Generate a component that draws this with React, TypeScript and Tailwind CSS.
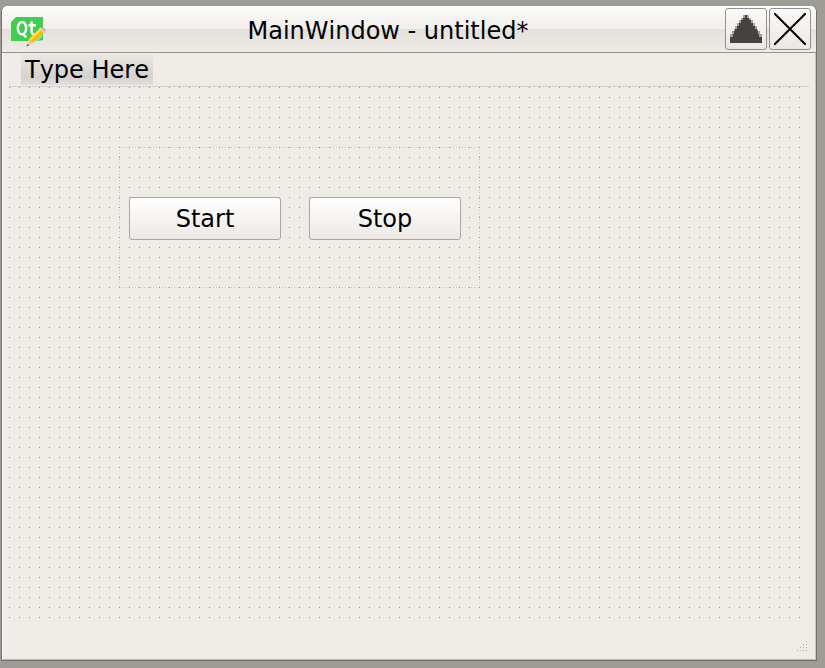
import React from "react";

const DOTS =
  "bg-[conic-gradient(from_270deg_at_1px_1px,#989591_90deg,transparent_0)] bg-[length:10px_10px]";

function QtIcon() {
  return (
    <svg width="36" height="34" viewBox="0 0 36 34" aria-hidden="true">
      <path d="M5 1H32V24L27 25H0V6Z" fill="#41cd52" />
      <ellipse cx="11" cy="12.2" rx="4.2" ry="6.2" fill="none" stroke="#fff" strokeWidth="2.4" />
      <path d="M12 18L15.3 21.4M20.6 5.5V16Q20.6 18.8 24.8 18.2M17.4 9.2H25" fill="none" stroke="#fff" strokeWidth="2.4" />
      <path d="M24 25L31 18L31.5 20L27 25Z" fill="#fff" opacity=".45" />
      <path d="M15.5 30.5L18 22.5L22.5 27Z" fill="#e9cfa4" />
      <path d="M18 23L29 12L33.5 16L22 27Z" fill="#f6bd10" />
      <path d="M19 23.7L30 13" stroke="#ffe43c" strokeWidth="2.2" />
      <path d="M29 12L31 10.5L35 14L33.5 16Z" fill="#d99a8c" />
      <path d="M28.3 12.7L29.8 11.3L34 15.2L32.7 16.8Z" fill="#d5d5d5" />
      <path d="M15.5 30.5L16.4 28L18 29.3Z" fill="#554a38" />
    </svg>
  );
}

function TitleButton({ label, children }: { label: string; children: React.ReactNode }) {
  return (
    <button
      aria-label={label}
      className="flex h-[42px] w-[42px] items-center justify-center rounded-[3px] border border-[#92908d] bg-linear-to-b from-[#fbfafa] to-[#ebe7e3]"
    >
      {children}
    </button>
  );
}

function PushButton({ children }: { children: React.ReactNode }) {
  return (
    <button className="h-[43px] w-[152px] rounded-[3px] border border-[#aaa6a3] bg-linear-to-b from-white to-[#ece8e5] pt-px text-[24px] leading-[40px]">
      {children}
    </button>
  );
}

export default function App() {
  return (
    <div className="h-[668px] w-[825px] bg-[#9e9c97] pt-[6px] pl-px font-['DejaVu_Sans',sans-serif] text-[24px] text-black [font-kerning:none]">
      <main className="flex h-[655px] w-[816px] flex-col overflow-hidden rounded-t-[6px] border-r border-b border-l border-[#73716e] bg-[#efece7]">
        <header className="flex h-[47px] shrink-0 items-start border-b border-[#96938f] bg-[linear-gradient(#fdfcfc_0px,#f1eeeb_23px,#e4e0db_23px,#eeebe7_46px)] pt-[2px] pr-[5px] pl-[9px]">
          <div className="mt-[8px] h-[34px] w-[36px]">
            <QtIcon />
          </div>
          <h1 className="ml-[200.5px] flex-1 whitespace-nowrap text-[24px] leading-[46px]">
            MainWindow - untitled*
          </h1>
          <div className="flex gap-[2px]">
            <TitleButton label="Shade">
              <svg width="32" height="28" viewBox="0 0 32 28" shapeRendering="crispEdges">
                <path
                  d="M13 0H19V3H21V5H23V8H25V11H27V14H28V16H30V19H32V28H0V19H2V16H4V14H5V11H7V8H9V5H11V3H13Z"
                  fill="#444341"
                  opacity=".45"
                />
                <path
                  d="M15 0H17V3H19V5H21V8H23V11H25V14H27V16H28V19H29V22H32V28H0V22H3V19H4V16H5V14H7V11H9V8H11V5H13V3H15Z"
                  fill="#444341"
                />
              </svg>
            </TitleButton>
            <TitleButton label="Close">
              <svg width="32" height="32" viewBox="0 0 32 32">
                <path d="M1 1L31 31M31 1L1 31" stroke="#000" strokeWidth="2" strokeLinecap="square" />
              </svg>
            </TitleButton>
          </div>
        </header>
        <div className="flex min-h-0 flex-1 flex-col border-r border-b border-l border-r-[#cbc8c4] border-b-[#b9b6b2] border-l-white px-[6px]">
          <nav className="flex h-[34px] shrink-0 items-start border-b border-[#d4d1cc] pt-px pl-[12px]">
            <span className="h-[31px] w-[132px] bg-linear-to-b from-[#ebe8e4] via-[#d5d1ce] via-75% to-[#e2deda] pl-[4px] leading-[32px]">
              Type Here
            </span>
          </nav>
          <section className={`h-[531px] w-[791px] shrink-0 pt-[60px] pl-[110px] ${DOTS}`}>
            <div className="flex h-[141px] w-[361px] gap-[28px] bg-[conic-gradient(from_270deg_at_1px_1px,#989591_90deg,transparent_0),repeating-linear-gradient(90deg,transparent_0_1px,#cac7c2_1px_2px,transparent_2px_3px),repeating-linear-gradient(90deg,transparent_0_1px,#cac7c2_1px_2px,transparent_2px_3px),repeating-linear-gradient(#cac7c2_0_1px,transparent_1px_3px),repeating-linear-gradient(#cac7c2_0_1px,transparent_1px_3px)] bg-[length:10px_10px,100%_1px,100%_1px,1px_100%,1px_100%] bg-[position:0_0,0_0,0_100%,0_0,100%_0] [background-repeat:repeat,no-repeat,no-repeat,no-repeat,no-repeat] pt-[50px] pl-[10px]">
              <PushButton>Start</PushButton>
              <PushButton>Stop</PushButton>
            </div>
          </section>
          <footer className="flex flex-1 items-end justify-end pb-[7px]">
            <svg width="13" height="12" viewBox="0 0 13 12" shapeRendering="crispEdges" aria-hidden="true">
              <path
                d="M10 1h1v1h-1zM7 4h1v1h-1zM10 4h1v1h-1zM4 7h1v1h-1zM7 7h1v1h-1zM10 7h1v1h-1zM1 10h1v1h-1zM4 10h1v1h-1zM7 10h1v1h-1zM10 10h1v1h-1z"
                fill="#b4b0ab"
              />
            </svg>
          </footer>
        </div>
      </main>
    </div>
  );
}
